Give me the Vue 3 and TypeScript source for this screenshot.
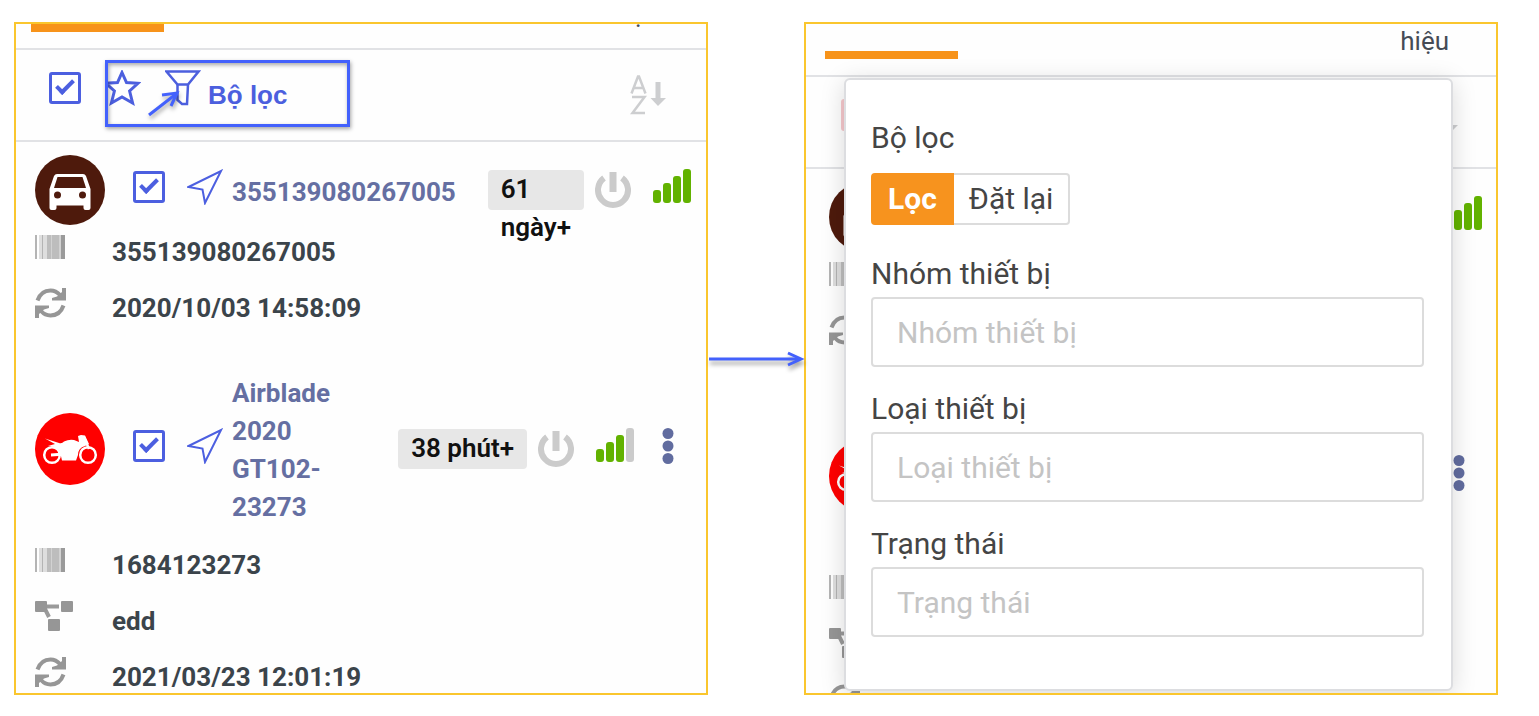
<script setup lang="ts">
import { ref } from 'vue'

interface Detail {
  icon: 'barcode' | 'group' | 'sync'
  value: string
}

interface Device {
  name: string
  kind: 'car' | 'bike'
  idle: string
  wrapIdle: boolean
  signal: number
  menu: boolean
  details: Detail[]
}

interface Screen {
  id: string
  filterOpen: boolean
}

const screens: Screen[] = [
  { id: 'list', filterOpen: false },
  { id: 'filter', filterOpen: true },
]

const devices: Device[] = [
  {
    name: '355139080267005',
    kind: 'car',
    idle: '61 ngày+',
    wrapIdle: true,
    signal: 4,
    menu: false,
    details: [
      { icon: 'barcode', value: '355139080267005' },
      { icon: 'sync', value: '2020/10/03 14:58:09' },
    ],
  },
  {
    name: 'Airblade 2020 GT102-23273',
    kind: 'bike',
    idle: '38 phút+',
    wrapIdle: false,
    signal: 3,
    menu: true,
    details: [
      { icon: 'barcode', value: '1684123273' },
      { icon: 'group', value: 'edd' },
      { icon: 'sync', value: '2021/03/23 12:01:19' },
    ],
  },
]

const fields = ref([
  { id: 'device-group', label: 'Nhóm thiết bị', value: '' },
  { id: 'device-type', label: 'Loại thiết bị', value: '' },
  { id: 'device-status', label: 'Trạng thái', value: '' },
])

function resetFields() {
  fields.value.forEach((field) => (field.value = ''))
}

const bars = [13, 20, 27, 34]
</script>

<template>
  <main class="page">
    <section
      v-for="screen in screens"
      :key="screen.id"
      class="panel"
      :class="{ 'panel-filter': screen.filterOpen }"
    >
      <div class="screen">
        <div class="tabs">
          <span class="tab-active"></span>
          <span class="tab-text">hiệu</span>
        </div>

        <div class="toolbar">
          <input type="checkbox" class="check" checked aria-label="Chọn tất cả" />
          <button class="tool" aria-label="Yêu thích">
            <svg width="36" height="36" viewBox="0 0 36 36" fill="none" stroke="currentColor" stroke-width="3">
              <path d="M17 2.500 L21.500 12.500 L33 13.300 L24.600 21 L27.600 33 L17 27 L6.400 33 L9.400 21 L1 13.300 L12.500 12.500 Z" />
            </svg>
          </button>
          <button class="tool filter-tool">
            <svg width="36" height="36" viewBox="0 0 36 36" fill="none" stroke="currentColor" stroke-width="2.500">
              <path d="M1.500 1.500 H33.500 L23 14.500 H12.500 Z" />
              <path d="M12.500 14.500 V30 L17 34 H22 L23 14.500" />
            </svg>
            <span>Bộ lọc</span>
          </button>
          <button class="sort" aria-label="Sắp xếp">
            <svg width="36" height="40" viewBox="0 0 36 40" fill="none" stroke="currentColor" stroke-width="2.500">
              <path d="M1.500 18.500 L8 1.500 H9 L15.500 18.500 M4 13 H13" />
              <path d="M2 22 H14.500 L2.500 38 H15" />
              <path d="M28 7 V25" stroke-width="5" />
              <path d="M20.500 23 H36 L28 31 Z" fill="currentColor" stroke="none" />
            </svg>
          </button>
          <div v-if="!screen.filterOpen" class="callout">
            <svg class="callout-arrow" width="36" height="30" viewBox="0 0 36 30" fill="none" stroke="#4361fc" stroke-width="3">
              <path d="M3 26 L30 5" />
              <path d="M16 6 L31 4 L25 17" />
            </svg>
          </div>
        </div>

        <div class="devices">
          <article v-for="device in devices" :key="device.name" class="device">
            <header class="device-head">
              <svg v-if="device.kind === 'car'" width="70" height="70" viewBox="0 0 70 70">
                <circle cx="35" cy="35" r="35" fill="#4e1a0c" />
                <path
                  fill="#fff"
                  d="M22 19 H48 Q50 19 51 21 L55.500 34 V53 Q55.500 55 53.500 55 H50.500 Q48.500 55 48.500 53 V50.500 H21.500 V53 Q21.500 55 19.500 55 H16.500 Q14.500 55 14.500 53 V34 L19 21 Q20 19 22 19 Z"
                />
                <path fill="#4e1a0c" d="M22.500 22 H47.500 L51 33 H19 Z" />
                <circle cx="22.500" cy="40" r="3.500" fill="#4e1a0c" />
                <circle cx="47.500" cy="40" r="3.500" fill="#4e1a0c" />
              </svg>
              <svg v-else width="70" height="72" viewBox="0 0 70 72">
                <ellipse cx="35" cy="36" rx="35" ry="36" fill="#ff0000" />
                <g fill="none" stroke="#fff">
                  <circle cx="17" cy="42" r="7.800" stroke-width="2.500" />
                  <circle cx="53" cy="42" r="7.800" stroke-width="2.500" />
                  <path d="M16 42 L30 41" stroke-width="3" />
                  <path d="M49 24 L54 36" stroke-width="2.500" />
                </g>
                <path
                  fill="#fff"
                  d="M10 25.500 L24 30 Q27 31 29 28.500 Q34 26 39 27 L44 29 L43 23 L46 22 L50 22.500 L54 31 L50 33 Q43 35 43 42 L41 47.500 H27 Q26 42 24 37 Q19 33 13 33 L20 31 Z"
                />
              </svg>
              <input type="checkbox" class="check" checked :aria-label="device.name" />
              <svg class="plane" width="36" height="36" viewBox="0 0 36 36" fill="none" stroke="#4c5fe0" stroke-width="2">
                <path d="M1.500 18 L34 2 L18 34 L15.500 20.500 Z" />
              </svg>
              <a class="name" href="#">{{ device.name }}</a>
              <span class="idle" :class="{ narrow: device.wrapIdle }">{{ device.idle }}</span>
              <svg class="power" width="36" height="36" viewBox="0 0 36 36" fill="none" stroke="#cbcbcb" stroke-width="6">
                <path d="M27 6 A15 15 0 1 1 9 6" />
                <path d="M18 0 V20" stroke-width="7" />
              </svg>
              <svg class="signal" width="38" height="34" viewBox="0 0 38 34">
                <rect
                  v-for="(bar, index) in bars"
                  :key="bar"
                  :x="index * 10"
                  :y="34 - bar"
                  width="8"
                  :height="bar"
                  rx="3"
                  :fill="index < device.signal ? '#62b200' : '#cbcbcb'"
                />
              </svg>
              <button v-if="device.menu" class="more" aria-label="Thêm">
                <svg width="12" height="36" viewBox="0 0 12 36" fill="#616c9f">
                  <circle cx="6" cy="5.500" r="5.500" />
                  <circle cx="6" cy="18" r="5.500" />
                  <circle cx="6" cy="30.500" r="5.500" />
                </svg>
              </button>
            </header>

            <div v-for="detail in device.details" :key="detail.value" class="detail">
              <span class="detail-icon">
                <svg v-if="detail.icon === 'barcode'" width="30" height="24" viewBox="0 0 30 24">
                  <path fill="#b4b4b4" d="M0 0 H2 V24 H0 Z M7 0 H8 V24 H7 Z" />
                  <path fill="#dedede" d="M4 0 H7 V24 H4 Z M8 0 H12 V24 H8 Z" />
                  <path fill="#bdbdbd" d="M12 0 H16 V24 H12 Z M17 0 H24 V24 H17 Z" />
                  <path fill="#d2d2d2" d="M16 0 H17 V24 H16 Z M24 0 H26 V24 H24 Z" />
                  <path fill="#9a9a9a" d="M26 0 H30 V24 H26 Z" />
                </svg>
                <svg v-else-if="detail.icon === 'group'" width="38" height="30" viewBox="0 0 38 30">
                  <path d="M8 5.500 H24 M9 6 L14 16" fill="none" stroke="#9a9a9a" stroke-width="4" />
                  <rect width="12" height="11" rx="1" fill="#969696" />
                  <rect x="26" width="12" height="11" rx="1" fill="#969696" />
                  <rect x="13" y="18" width="12" height="12" rx="1" fill="#969696" />
                </svg>
                <svg v-else width="31" height="30" viewBox="0 0 31 30" fill="none" stroke="#969696" stroke-width="4">
                  <path d="M2.500 12.500 Q6 2.500 15.500 2.500 Q21 2.500 25 7" />
                  <path d="M28.500 17.500 Q25 27.500 15.500 27.500 Q10 27.500 6 23" />
                  <path d="M31 0 V12.500 H17 V10 L22 8.500 L27 4 V0 Z" fill="#969696" stroke="none" />
                  <path d="M0 30 V17.500 H14 V20 L9 21.500 L4 26 V30 Z" fill="#969696" stroke="none" />
                </svg>
              </span>
              <span>{{ detail.value }}</span>
            </div>
          </article>
        </div>
      </div>

      <form v-if="screen.filterOpen" class="popup" @submit.prevent>
        <h2 class="popup-title">Bộ lọc</h2>
        <div class="actions">
          <button type="submit" class="apply">Lọc</button>
          <button type="button" class="reset" @click="resetFields">Đặt lại</button>
        </div>
        <div v-for="field in fields" :key="field.id" class="field">
          <label :for="field.id">{{ field.label }}</label>
          <input :id="field.id" v-model="field.value" type="text" :placeholder="field.label" />
        </div>
      </form>
    </section>

    <svg class="step-arrow" width="96" height="24" viewBox="0 0 96 24" fill="none" stroke="#4361fc" stroke-width="3">
      <path d="M1 12 H92" />
      <path d="M80 6 L93 12 L80 18" />
    </svg>
  </main>
</template>

<style>
body {
  margin: 0;
  background: #fff;
}
</style>

<style scoped>
.page {
  display: grid;
  grid-template-columns: minmax(0, 1fr) 96px minmax(0, 1fr);
  padding: 22px 41px 21px 14px;
  font-family: Roboto, 'Noto Sans', sans-serif;
  font-size: 26px;
}

.page *,
.page *::before {
  box-sizing: border-box;
}

button {
  margin: 0;
  padding: 0;
  border: 0;
  background: none;
  font: inherit;
  color: inherit;
  cursor: pointer;
}

svg {
  display: block;
  flex: none;
}

.panel {
  display: grid;
  grid-template-columns: minmax(0, 1fr);
  grid-row: 1;
  grid-column: 1;
  border: 2px solid #fac62e;
  background: #fefefe;
  overflow: hidden;
}

.panel-filter {
  grid-column: 3;
}

.step-arrow {
  grid-row: 1;
  grid-column: 2;
  align-self: center;
  overflow: visible;
  filter: drop-shadow(1px 4px 2px rgba(0, 0, 0, 0.35));
}

/* The list never stretches its panel; whatever does not fit is cut off. */
.screen {
  grid-area: 1 / 1;
  height: 0;
  min-height: 100%;
  overflow: hidden;
}

.tabs {
  display: flex;
  align-items: flex-end;
  justify-content: space-between;
  height: 26px;
  padding: 0 47px 0 15px;
  border-bottom: 2px solid #e1e2e5;
}

.panel-filter .tabs {
  height: 53px;
  padding-left: 19px;
}

.tab-active {
  width: 133px;
  height: 8px;
  margin-bottom: 16px;
  background: #f7931a;
}

.tab-text {
  padding-bottom: 19px;
  line-height: 30px;
  color: #454b55;
}

.toolbar {
  position: relative;
  display: flex;
  align-items: center;
  gap: 24px;
  height: 92px;
  padding: 0 40px 0 33px;
  border-bottom: 2px solid #e1e2e5;
  color: #4c5fde;
}

.panel-filter .toolbar {
  padding: 0 38px 0 35px;
}

.toolbar .check {
  margin-bottom: 14px;
}

.panel-filter .toolbar .check {
  color: #f6c8cc;
}

.tool svg {
  margin-bottom: 14px;
}

.filter-tool {
  display: flex;
  align-items: center;
  gap: 7px;
  font-family: 'Liberation Sans', Arial, sans-serif;
  font-weight: 700;
}

.sort {
  margin-left: auto;
  color: #cdced0;
}

.callout {
  position: absolute;
  top: 10px;
  left: 89px;
  width: 245px;
  height: 67px;
  border: 3px solid #4361fc;
  box-shadow:
    1px 2px 4px rgba(0, 0, 0, 0.35),
    inset 1px 2px 4px rgba(0, 0, 0, 0.35);
  pointer-events: none;
}

.callout-arrow {
  position: absolute;
  top: 26px;
  left: 38px;
  overflow: visible;
  filter: drop-shadow(1px 3px 2px rgba(0, 0, 0, 0.35));
}

.check {
  position: relative;
  flex: none;
  width: 32px;
  height: 32px;
  margin: 0;
  border: 3px solid currentColor;
  border-radius: 3px;
  color: #4c5fe0;
  background: #fff;
  appearance: none;
}

.check:checked::before {
  content: '';
  position: absolute;
  top: 1px;
  left: 8px;
  width: 10px;
  height: 18px;
  border: solid currentColor;
  border-width: 0 4px 4px 0;
  rotate: 45deg;
}

.devices {
  display: flex;
  flex-direction: column;
  gap: 22px;
  padding: 13px 15px 0 19px;
}

.panel-filter .devices {
  padding: 13px 14px 0 23px;
}

.device-head {
  display: flex;
  align-items: center;
}

.device-head .check {
  margin: 0 22px 6px 28px;
}

.plane {
  margin: 0 9px 6px 0;
}

.name {
  flex: 1;
  margin: 15px 28px 12px 0;
  line-height: 38px;
  font-weight: 700;
  color: #656fa2;
  text-decoration: none;
}

.idle {
  flex: none;
  height: 40px;
  padding: 0 13px;
  border-radius: 4px;
  background: #e7e7e7;
  line-height: 38px;
  font-weight: 600;
  white-space: nowrap;
  color: #111;
}

.idle.narrow {
  width: min-content;
  white-space: normal;
}

.power {
  margin: 0 22px 0 11px;
}

.signal {
  margin-bottom: 8px;
}

.more {
  margin: 0 17px 6px 28px;
}

.detail {
  display: flex;
  align-items: center;
  height: 56px;
  padding-bottom: 2px;
  font-weight: 700;
  color: #3b444b;
}

.detail-icon {
  width: 77px;
  padding-bottom: 10px;
}

.popup {
  grid-area: 1 / 1;
  position: relative;
  margin: 54px 43px 2px 38px;
  padding: 38px 27px 52px 25px;
  border: 2px solid #dcdde0;
  border-radius: 6px;
  background: #fff;
  box-shadow: 0 4px 24px rgba(0, 0, 0, 0.15);
  font-size: 30px;
  line-height: 40px;
  color: #454545;
}

.popup-title {
  margin: 0;
  font-size: 30px;
  font-weight: 400;
}

.actions {
  display: flex;
  margin: 15px 0 29px;
}

.actions button {
  height: 52px;
  padding: 0 15px;
  border: 2px solid #dcdcdc;
}

.actions .apply {
  border-color: #f7931e;
  border-radius: 4px 0 0 4px;
  background: #f7931e;
  font-weight: 700;
  color: #fff;
}

.actions .reset {
  border-left: 0;
  border-radius: 0 4px 4px 0;
  background: #fff;
}

.field + .field {
  margin-top: 22px;
}

.field label {
  display: block;
  margin-bottom: 3px;
}

.field input {
  display: block;
  width: 100%;
  height: 70px;
  padding: 0 24px;
  border: 2px solid #dcdcdc;
  border-radius: 4px;
  background: #fff;
  font: inherit;
  color: #454545;
}

.field input::placeholder {
  color: #c4c4c4;
  opacity: 1;
}
</style>
